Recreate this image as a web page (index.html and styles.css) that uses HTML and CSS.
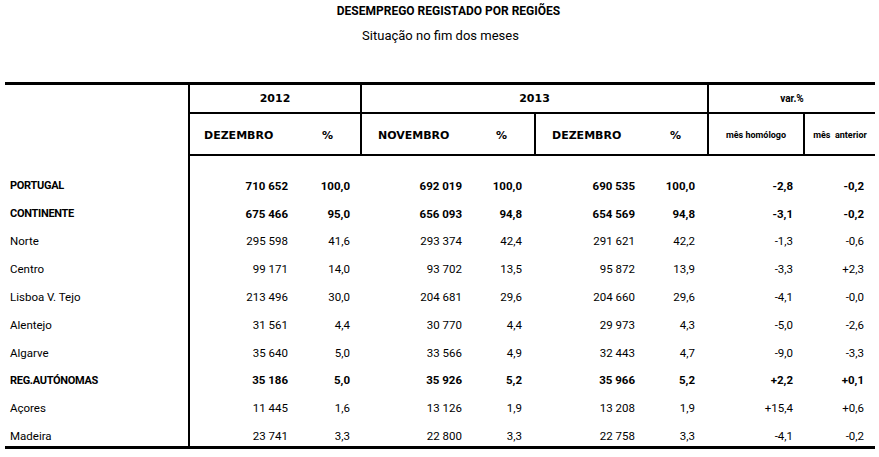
FILE: index.html
```html
<!DOCTYPE html>
<html lang="pt">
<head>
<meta charset="utf-8">
<title>Desemprego registado por regiões</title>
<link rel="stylesheet" href="styles.css">
</head>
<body>
<div class="page">
  <h1 class="title">DESEMPREGO REGISTADO POR REGIÕES</h1>
  <p class="subtitle">Situação no fim dos meses</p>

  <div class="table">
    <div class="head">
      <div class="h-blank"></div>
      <div class="h-cell h-year y2012">2012</div>
      <div class="h-cell h-year y2013">2013</div>
      <div class="h-cell h-var">var.%</div>
      <div class="h-cell h-month m2012"><span class="mon">DEZEMBRO</span><span>%</span></div>
      <div class="h-cell h-month m2013a"><span class="mon">NOVEMBRO</span><span>%</span></div>
      <div class="h-cell h-month m2013b"><span class="mon">DEZEMBRO</span><span>%</span></div>
      <div class="h-cell h-small">mês homólogo</div>
      <div class="h-cell h-small">mês&nbsp; anterior</div>
    </div>

    <div class="body">
      <div class="row bold"><span class="lab">PORTUGAL</span><span class="n">710 652</span><span class="p">100,0</span><span class="n">692 019</span><span class="p">100,0</span><span class="n">690 535</span><span class="p">100,0</span><span class="v1">-2,8</span><span class="v2">-0,2</span></div>
      <div class="row bold"><span class="lab">CONTINENTE</span><span class="n">675 466</span><span class="p">95,0</span><span class="n">656 093</span><span class="p">94,8</span><span class="n">654 569</span><span class="p">94,8</span><span class="v1">-3,1</span><span class="v2">-0,2</span></div>
      <div class="row"><span class="lab">Norte</span><span class="n">295 598</span><span class="p">41,6</span><span class="n">293 374</span><span class="p">42,4</span><span class="n">291 621</span><span class="p">42,2</span><span class="v1">-1,3</span><span class="v2">-0,6</span></div>
      <div class="row"><span class="lab">Centro</span><span class="n">99 171</span><span class="p">14,0</span><span class="n">93 702</span><span class="p">13,5</span><span class="n">95 872</span><span class="p">13,9</span><span class="v1">-3,3</span><span class="v2">+2,3</span></div>
      <div class="row"><span class="lab">Lisboa V. Tejo</span><span class="n">213 496</span><span class="p">30,0</span><span class="n">204 681</span><span class="p">29,6</span><span class="n">204 660</span><span class="p">29,6</span><span class="v1">-4,1</span><span class="v2">-0,0</span></div>
      <div class="row"><span class="lab">Alentejo</span><span class="n">31 561</span><span class="p">4,4</span><span class="n">30 770</span><span class="p">4,4</span><span class="n">29 973</span><span class="p">4,3</span><span class="v1">-5,0</span><span class="v2">-2,6</span></div>
      <div class="row"><span class="lab">Algarve</span><span class="n">35 640</span><span class="p">5,0</span><span class="n">33 566</span><span class="p">4,9</span><span class="n">32 443</span><span class="p">4,7</span><span class="v1">-9,0</span><span class="v2">-3,3</span></div>
      <div class="row bold"><span class="lab">REG.AUTÓNOMAS</span><span class="n">35 186</span><span class="p">5,0</span><span class="n">35 926</span><span class="p">5,2</span><span class="n">35 966</span><span class="p">5,2</span><span class="v1">+2,2</span><span class="v2">+0,1</span></div>
      <div class="row"><span class="lab">Açores</span><span class="n">11 445</span><span class="p">1,6</span><span class="n">13 126</span><span class="p">1,9</span><span class="n">13 208</span><span class="p">1,9</span><span class="v1">+15,4</span><span class="v2">+0,6</span></div>
      <div class="row"><span class="lab">Madeira</span><span class="n">23 741</span><span class="p">3,3</span><span class="n">22 800</span><span class="p">3,3</span><span class="n">22 758</span><span class="p">3,3</span><span class="v1">-4,1</span><span class="v2">-0,2</span></div>
    </div>
  </div>
</div>
</body>
</html>
```

FILE: styles.css
```css
html, body {
  margin: 0;
  padding: 0;
  background: #fff;
  color: #000;
}

.page {
  width: 879px;
  height: 457px;
  overflow: hidden;
  font-family: Roboto, "Liberation Sans", sans-serif;
}

.title {
  margin: 0;
  padding-top: 4px;
  height: 16px;
  text-align: center;
  padding-left: 18px;
  font-weight: bold;
  font-size: 12px;
  line-height: 14px;
  white-space: nowrap;
}

.subtitle {
  margin: 0;
  padding-top: 8px;
  padding-left: 2px;
  height: 54px;
  text-align: center;
  font-size: 13px;
  line-height: 16px;
  white-space: nowrap;
}

.table {
  margin-left: 5px;
  width: 870px;
  border-top: 3px solid #000;
  border-bottom: 3px solid #000;
}

.head,
.row {
  display: grid;
  grid-template-columns: 183px 112px 60px 114px 60px 113px 60px 96px 72px;
}

.head {
  grid-template-rows: 29px 42px;
}

.h-blank {
  grid-column: 1;
  grid-row: 1 / 3;
}

.h-cell {
  border-left: 2px solid #000;
  border-bottom: 2px solid #000;
  display: flex;
  align-items: center;
  font-family: "DejaVu Sans", Verdana, sans-serif;
  font-weight: bold;
  font-size: 11px;
  white-space: nowrap;
}

.h-year,
.h-var,
.h-small {
  justify-content: center;
}

.y2012 { grid-column: 2 / 4; grid-row: 1; }
.y2013 { grid-column: 4 / 8; grid-row: 1; }
.h-var {
  grid-column: 8 / 10;
  grid-row: 1;
  font-family: Roboto, "Liberation Sans", sans-serif;
  font-size: 10px;
}

.m2012 { grid-column: 2 / 4; grid-row: 2; padding-left: 14px; padding-top: 2px; }
.m2013a { grid-column: 4 / 6; grid-row: 2; padding-left: 16px; padding-top: 2px; }
.m2013b { grid-column: 6 / 8; grid-row: 2; padding-left: 16px; padding-top: 2px; }

.mon {
  width: 118px;
}

.h-small {
  grid-row: 2;
  font-family: Roboto, "Liberation Sans", sans-serif;
  font-size: 9px;
  padding-top: 1px;
}

.body {
  box-sizing: border-box;
  height: 290px;
  padding-top: 16px;
  display: grid;
  grid-template-rows: repeat(10, 27.8px);
  background: linear-gradient(#000, #000) 183px 0 / 2px 100% no-repeat;
}

.row {
  align-items: center;
  font-size: 11.5px;
  white-space: nowrap;
}

.row > span {
  text-align: right;
}

.row .lab {
  text-align: left;
  padding-left: 5px;
}

.bold {
  font-weight: bold;
}

.bold .lab {
  font-size: 11px;
  letter-spacing: -0.3px;
}

.row .n { padding-right: 12px; }
.row .p { padding-right: 12px; }
.row .p:nth-child(3) { padding-right: 10px; }
.row .v1 { padding-right: 10px; }
.row .v2 { padding-right: 11px; }
```
